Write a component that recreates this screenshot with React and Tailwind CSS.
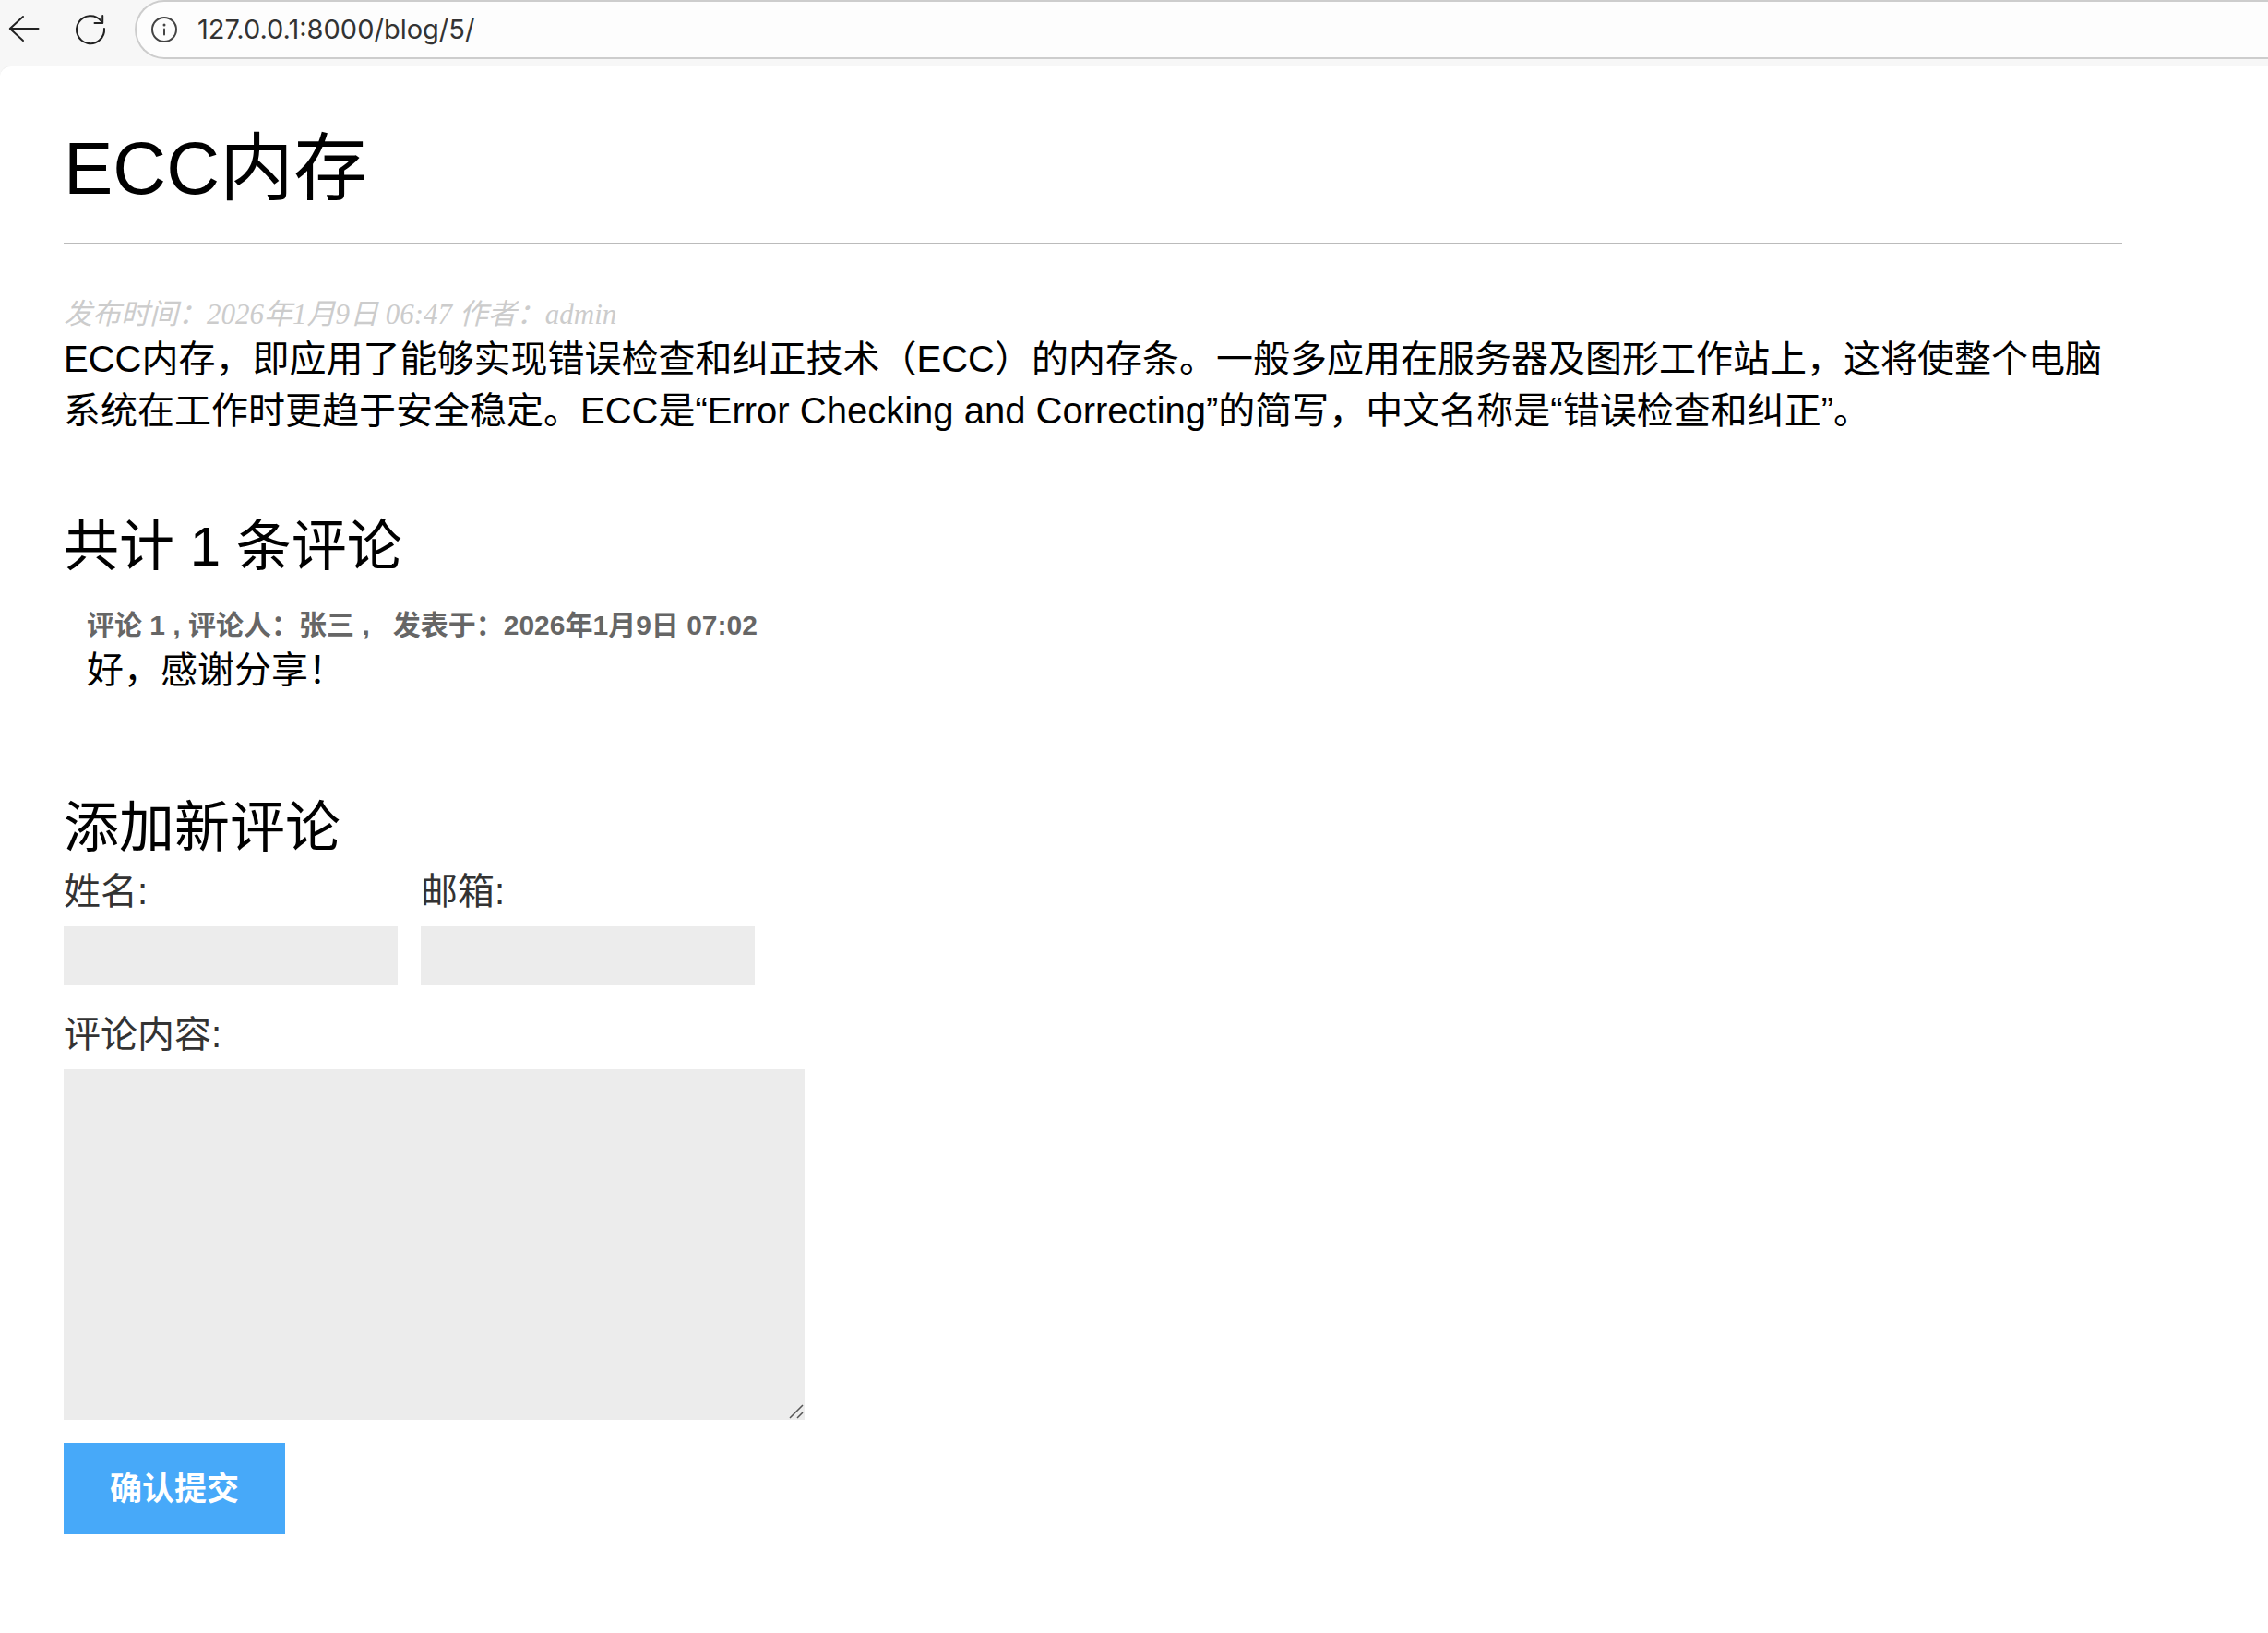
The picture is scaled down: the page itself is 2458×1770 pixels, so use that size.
import { useState } from 'react';

const post = {
  title: 'ECC内存',
  created: '2026年1月9日 06:47',
  author: 'admin',
  body: 'ECC内存，即应用了能够实现错误检查和纠正技术（ECC）的内存条。一般多应用在服务器及图形工作站上，这将使整个电脑系统在工作时更趋于安全稳定。ECC是“Error Checking and Correcting”的简写，中文名称是“错误检查和纠正”。',
};

const comments = [
  { id: 1, name: '张三', created: '2026年1月9日 07:02', body: '好，感谢分享！' },
];

const BrowserBar = () => {
  const [url, setUrl] = useState('127.0.0.1:8000/blog/5/');

  return (
    <header className="flex h-16 items-center pl-2">
      <button type="button" aria-label="Back">
        <svg width="36" height="36" viewBox="0 0 36 36" fill="none" stroke="#222" strokeWidth="2" strokeLinecap="round" strokeLinejoin="round">
          <path d="M33.5 17H3M17 4L2.8 17L17 30" />
        </svg>
      </button>
      <button type="button" aria-label="Reload" className="ml-9">
        <svg width="36" height="36" viewBox="0 0 36 36" fill="none" stroke="#222" strokeWidth="2" strokeLinecap="round" strokeLinejoin="round">
          <path d="M33 17A15 15 0 1 1 29.5 8.5L31 10.5" />
          <path d="M31.2 3V11H22.5" />
        </svg>
      </button>
      <div className="ml-[30px] flex h-16 flex-1 items-center gap-[22px] rounded-l-full border-y-2 border-l-2 border-[#cdcdcd] bg-[#fdfdfd] pl-4">
        <svg width="28" height="28" viewBox="0 0 28 28" fill="none" stroke="#444" strokeWidth="2" strokeLinecap="round">
          <circle cx="14" cy="14" r="13" />
          <path d="M14 13.5V19.5" />
          <circle cx="14" cy="9" r="1.5" fill="#444" stroke="none" />
        </svg>
        <input
          type="text"
          aria-label="Address"
          value={url}
          onChange={(e) => setUrl(e.target.value)}
          className="h-10 min-w-0 flex-1 bg-transparent font-['Inter',sans-serif] text-[29px] text-[#333] outline-none"
        />
      </div>
    </header>
  );
};

const Comment = ({ index, comment }) => (
  <article className="pl-[25px]">
    <div className="text-[30px] leading-10 font-bold text-[#666]">
      评论 {index} , 评论人：{comment.name} , &nbsp;&nbsp;发表于：{comment.created}
    </div>
    <p className="text-[40px] leading-14">{comment.body}</p>
  </article>
);

const CommentForm = () => {
  const [form, setForm] = useState({ name: '', email: '', text: '' });

  const handleChange = (e) => {
    setForm({ ...form, [e.target.name]: e.target.value });
  };

  return (
    <form onSubmit={(e) => e.preventDefault()} className="text-[40px] leading-14">
      <div className="flex gap-[25px]">
        <div className="flex flex-col gap-2.5">
          <label htmlFor="name" className="text-[#333]">姓名:</label>
          <input
            id="name"
            name="name"
            type="text"
            value={form.name}
            onChange={handleChange}
            className="h-16 w-[362px] bg-[#ececec] px-3 outline-none"
          />
        </div>
        <div className="flex flex-col gap-2.5">
          <label htmlFor="email" className="text-[#333]">邮箱:</label>
          <input
            id="email"
            name="email"
            type="email"
            value={form.email}
            onChange={handleChange}
            className="h-16 w-[362px] bg-[#ececec] px-3 outline-none"
          />
        </div>
      </div>

      <div className="mt-[25px] flex flex-col items-start gap-2.5">
        <label htmlFor="text" className="text-[#333]">评论内容:</label>
        <div className="relative flex">
          <textarea
            id="text"
            name="text"
            value={form.text}
            onChange={handleChange}
            className="h-[380px] w-[803px] resize-none bg-[#ececec] p-3 outline-none"
          />
          {/* Resize grip */}
          <svg className="absolute right-px bottom-px" width="16" height="16" viewBox="0 0 16 16" fill="none" stroke="#555" strokeWidth="1.5">
            <path d="M1 15L15 1M9 15L15 9" />
          </svg>
        </div>
      </div>

      <button
        type="submit"
        className="mt-[25px] block bg-[#47a9f9] px-[50px] py-[25px] text-[35px] leading-[49px] font-bold text-white"
      >
        确认提交
      </button>
    </form>
  );
};

const App = () => {
  return (
    <div className="min-h-screen bg-[#f7f7f7] font-['Liberation_Sans','Noto_Sans_CJK_SC',sans-serif] text-black">
      <BrowserBar />

      <main className="mt-[7px] min-h-[calc(100vh-71px)] rounded-tl-xl border-t border-[#ececec] bg-white pt-[55px] pr-[158px] pl-[69px]">
        <h1 className="border-b-2 border-[#bbb] pb-6 text-[80px] leading-28">{post.title}</h1>

        <div className="mt-14 font-['Liberation_Serif','Noto_Sans_CJK_SC',serif] text-[31px] leading-10 text-[#ccc] italic">
          发布时间：{post.created} 作者：{post.author}
        </div>
        <p className="text-[40px] leading-14">{post.body}</p>

        <section className="mt-20">
          <h2 className="mb-[25px] text-[60px] leading-20">共计 {comments.length} 条评论</h2>
          {comments.map((comment, index) => (
            <Comment key={comment.id} index={index + 1} comment={comment} />
          ))}
        </section>

        <section className="mt-26">
          <h2 className="text-[60px] leading-20">添加新评论</h2>
          <CommentForm />
        </section>
      </main>
    </div>
  );
};

export default App;
